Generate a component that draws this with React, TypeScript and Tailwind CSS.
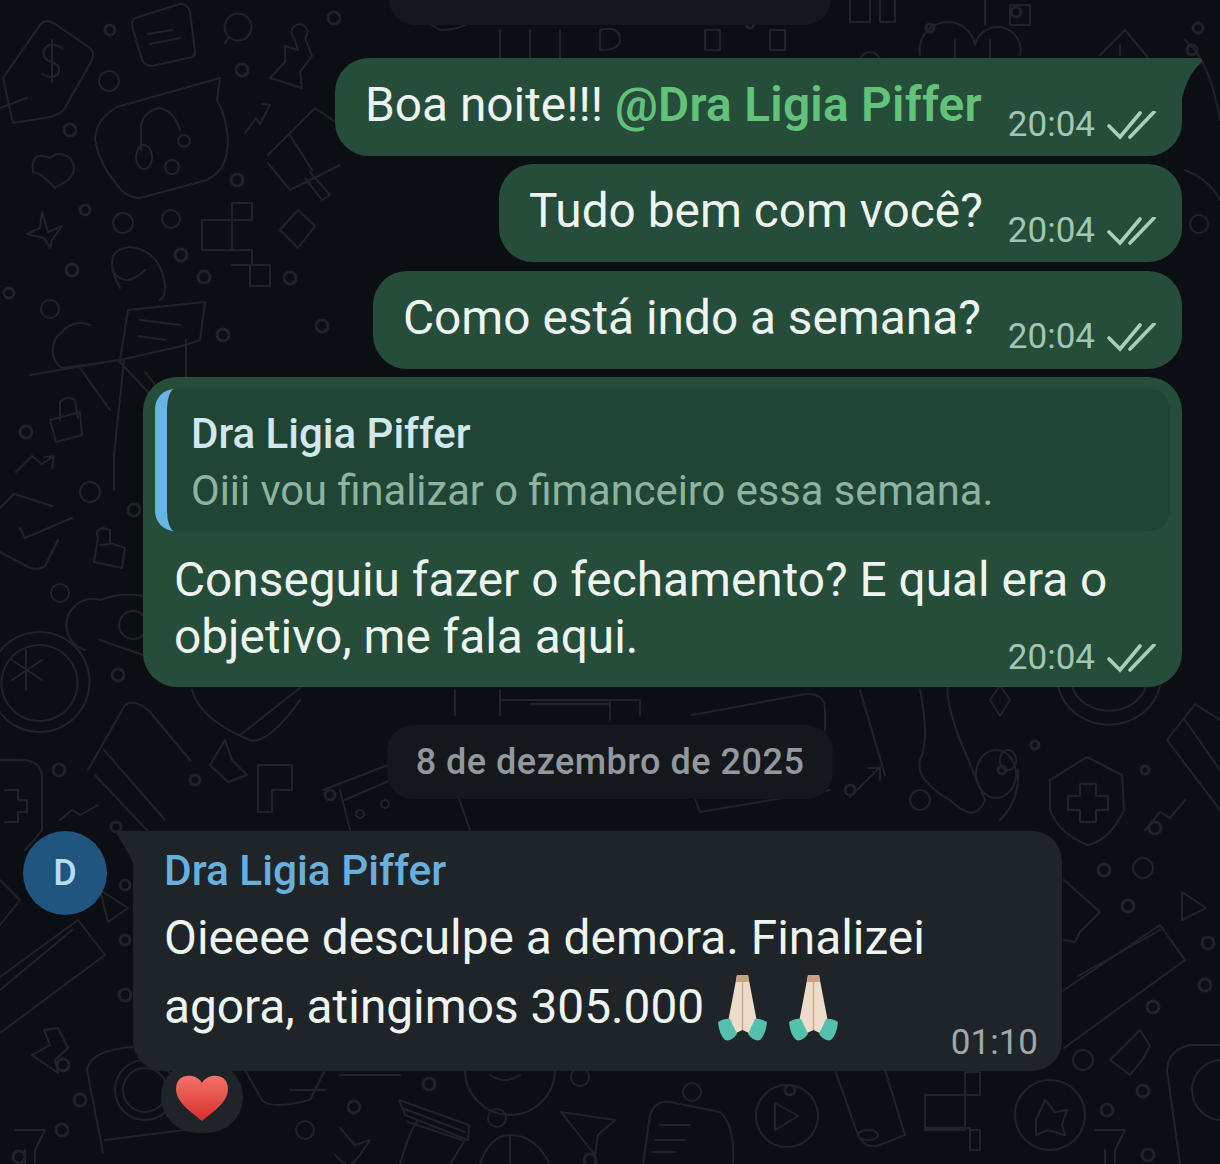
import React from "react";

const font = "font-['Roboto',sans-serif]";

const rings: [number, number, number][] = [
  [110, 30, 5], [109, 81, 10], [70, 130, 6], [242, 70, 6], [237, 180, 6], [334, 18, 6], [85, 210, 5],
  [123, 223, 10], [171, 219, 9], [181, 255, 6], [204, 277, 6], [72, 270, 6], [9, 293, 5], [50, 309, 9],
  [223, 335, 6], [322, 326, 6], [290, 278, 6], [26, 432, 6], [90, 492, 10], [134, 510, 6], [60, 593, 9],
  [118, 675, 6], [59, 770, 6], [116, 827, 5], [1155, 828, 6], [1104, 870, 6], [1143, 868, 10], [1128, 906, 6],
  [1208, 943, 6], [1205, 985, 6], [1153, 1007, 6], [1083, 1060, 10], [1143, 1091, 6], [1107, 1110, 6],
  [1148, 1155, 6], [429, 1084, 6], [354, 1107, 6], [305, 1130, 9], [497, 1118, 9], [590, 1160, 6], [580, 1077, 9],
  [692, 1092, 9], [790, 1090, 5], [80, 1100, 6], [62, 1130, 6], [19, 1157, 6], [63, 1065, 6],
  [195, 780, 5], [330, 795, 5], [850, 790, 5], [1002, 770, 4], [1035, 745, 4], [920, 800, 10], [1145, 770, 4],
  [1198, 28, 5], [750, 24, 4], [870, 62, 10], [1192, 50, 5], [1016, 12, 5], [1199, 224, 9],
  [930, 28, 4], [45, 880, 5], [125, 995, 6], [125, 940, 5], [125, 885, 5],
];

const lines = [
  // money tag
  "M40 25Q46 18 55 24L90 48Q95 52 92 60L65 108Q60 115 50 117L13 123L3 78Z",
  "M62 48Q50 40 44 50Q42 60 52 62Q62 66 58 74Q52 80 42 74M52 40V82M27 98L0 108",
  // note card
  "M135 18L180 4Q188 3 190 12L195 52Q195 58 188 58L152 66Q145 66 142 60L132 26Q132 20 135 18Z M148 34L172 30M150 44L180 38",
  // magnifier
  "M229 37A12 12 0 1 0 247 17A12 12 0 1 0 229 37L225 43",
  // chess figure
  "M285 46L298 50L294 38A8 8 0 1 1 305 38L312 56L300 72L302 88L270 78L285 62Z",
  // speech and headset
  "M220 78L117 107Q95 120 95 140Q100 165 115 182Q125 198 140 198L207 180Q228 170 228 140Q226 115 217 100Z",
  "M141 150V125Q145 110 160 108Q175 112 180 130M144 145A8 12 0 1 0 144.1 145M184 135A6 6 0 1 0 184.1 135M172 160A7 7 0 1 0 172.1 160",
  // arrow
  "M245 133L256 118L260 124L270 105L262 104",
  // megaphone
  "M268 155L315 108L340 125M268 163L290 190L340 165M290 135L312 170M305 178L322 200L330 195L310 172",
  // heart and star
  "M55 188Q40 172 33 172Q30 150 50 158Q58 150 70 158Q80 172 65 182Z",
  "M42 212L48 232L62 226L52 240L50 248L44 238L27 234L40 228Z",
  "M298 210L315 226L298 248L280 230Z",
  "M202 220H232V203H252V220H232V250H202ZM232 250H252V265H270V286H250V265H232",
  // smile and basket
  "M120 288Q100 250 130 247Q160 250 165 285Q165 298 160 300M112 270Q125 290 145 270",
  "M90 325A24 24 0 0 0 62 332A22 22 0 0 0 62 368L120 360L128 310L205 302L200 340L182 346L120 360M140 320L180 325M138 336L165 340",
  "M30 375L118 360L160 405L200 396M186 340V400M145 372L175 410M80 368L110 410",
  // left column
  "M60 420V402A11 11 0 0 1 75 400L78 418M50 420L80 412L82 435L56 442Z",
  "M16 472L32 456M32 456L42 464L54 456M54 456L44 457M54 456L52 468",
  "M0 508L14 494L52 506M20 528L25 538L72 518M58 540L45 566Q40 570 30 568L0 552",
  "M103 528Q94 530 98 538L94 562L122 568L125 548L110 543V530Z M100 545L110 544",
  "M85 650A20 20 0 0 1 100 600Q120 592 143 596M143 655L100 640M143 615A14 14 0 1 0 143 635",
  "M114 490V455M124 360L114 455",
  "M40 632A50 50 0 1 1 39 632M40 645A38 38 0 1 1 39 645M26 650L26 690M12 660L42 680M42 660L12 680",
  "M88 770L125 705Q135 698 150 712L190 760M95 775L175 860M104 750L165 820",
  "M0 760H20Q40 760 42 775L42 830Q35 840 25 850M5 790H18V800H27V812H18V822H5",
  "M60 820L72 810L80 815L98 805",
  // lower left
  "M0 977L78 920L105 955L0 1033M0 990L72 930",
  "M100 890L128 908L108 922Z",
  "M0 880L20 900L0 925",
  "M32 1055L50 1045L44 1030L58 1028L68 1048L55 1060L58 1073Z",
  "M87 1070Q90 1050 133 1047M87 1070L103 1153M105 1140L200 1128",
  "M15 1130H45L35 1150V1164M25 1150V1164",
  // under the date
  "M192 690Q200 720 250 740Q268 745 300 700M240 735L305 684",
  "M210 765L225 740L232 760L247 775L228 782Z",
  "M258 765H292V790H272V812H258Z",
  "M323 790L440 745L470 830M340 790L350 830M345 800L425 765M360 810A4 4 0 1 0 360.1 810M385 800A4 4 0 1 0 385.1 800",
  "M455 690V715M500 715V700H640V715M500 700V690M530 704H610M610 700V720",
  "M692 715L800 695Q825 690 825 710V730M692 790L700 812L830 790",
  "M850 797L880 767M868 768H880V780M860 690L885 775",
  "M920 690Q930 740 920 760Q915 780 950 800Q975 825 985 800L960 740Q945 700 948 684",
  "M1000 685L1010 700L1000 716L990 700Z",
  "M996 750A20 24 0 1 0 996.1 750M1008 750A8 10 0 1 0 1008.1 750M1018 770Q1020 800 1000 820",
  "M1058 686A52 48 0 0 0 1160 686M1072 686A38 32 0 0 0 1146 686",
  "M1167 740L1195 704L1220 720M1167 740L1220 810M1185 720L1220 770",
  // shield
  "M1050 780L1087 757L1122 775L1124 810Q1110 840 1088 845Q1060 835 1050 810Z",
  "M1080 784H1096V796H1108V810H1096V822H1080V810H1068V796H1080Z",
  "M1145 830L1160 812L1170 818L1185 800",
  // right column
  "M1064 880L1100 912L1080 932L1075 942L1064 940",
  "M1182 892L1206 908L1182 920Z",
  "M1064 990L1160 925L1185 960L1064 1048M1078 976L1160 930",
  "M1110 1060L1140 1030L1150 1046L1142 1060L1130 1075Z",
  "M1220 1045H1190Q1168 1050 1167 1070L1180 1164",
  "M1045 1100L1055 1112L1067 1110L1062 1125L1065 1135L1048 1130L1036 1135L1036 1120Z",
  "M1095 1130H1125L1115 1150V1164M1105 1150V1164",
  // bottom row
  "M245 1070L262 1100Q270 1110 310 1100L325 1070M290 1090H325M340 1075H400",
  "M400 1164Q410 1130 418 1120M465 1140L450 1164M399 1100L469 1125L468 1140L405 1115Z M402 1108L465 1132M408 1122L462 1140",
  "M340 1128L355 1145L370 1140L360 1155L352 1164M335 1155L345 1164",
  "M465 1070A32 32 0 0 0 555 1070M490 1075Q505 1085 520 1075",
  "M561 1112L615 1120L598 1135L595 1155Z",
  "M643 1164L650 1115Q655 1100 670 1102L720 1112Q735 1125 733 1164M660 1125H690M655 1140H685M652 1152H675",
  "M480 1164Q490 1135 510 1135Q535 1135 550 1164M510 1135V1164",
  "M775 1103L798 1116L775 1130Z",
  "M835 1070L858 1135Q865 1150 880 1145L905 1135L885 1070M868 1130A10 5 0 1 0 868.1 1130",
  "M925 1095H965V1072H980V1095H965V1130H925ZM925 1128H970V1150H980V1130H970",
  // top row
  "M410 12L440 30Q460 30 470 22M500 30V62M530 30V62M560 30V62M600 30Q620 25 620 40Q620 50 600 50ZM705 30H720V50H705Z M770 30H785V50H770Z",
  "M920 55A25 25 0 0 1 975 45A20 20 0 0 1 1020 55M955 40V60M990 40V60",
  "M985 0V25M1010 5H1030V25H1010ZM850 0V22H870V0M880 0V22H895V0",
  "M1100 55L1125 30L1150 60M1120 45V55",
  "M1185 170Q1210 180 1220 200M1185 40Q1210 60 1220 120",
];

function Doodles() {
  return (
    <svg className="absolute inset-0 h-full w-full" viewBox="0 0 1220 1164" fill="none" stroke="#1e2428" strokeWidth="2" strokeLinecap="round" strokeLinejoin="round">
      {lines.map((d, i) => (
        <path key={i} d={d} />
      ))}
      {rings.map(([x, y, r], i) => (
        <circle key={i} cx={x} cy={y} r={r} strokeWidth={r < 7 ? 3 : 2} />
      ))}
      <circle cx="145" cy="1090" r="30" />
      <circle cx="145" cy="1090" r="22" />
      <circle cx="1222" cy="1090" r="30" />
      <circle cx="787" cy="1116" r="31" />
      <circle cx="1050" cy="1115" r="35" />
    </svg>
  );
}

function DoubleCheck() {
  return (
    <svg className="ml-[12px] h-[29px] w-[49px]" viewBox="0 0 49 29" fill="none" stroke="#a9cfba" strokeWidth="3.6" strokeLinecap="round">
      <path d="M2 15L13 26L33 2" />
      <path d="M23 26L47 1" />
    </svg>
  );
}

function Stamp() {
  return (
    <div className="flex shrink-0 items-center text-[35px] leading-[40px] text-[#a3c6b3]">
      <span>20:04</span>
      <DoubleCheck />
    </div>
  );
}

function Outgoing({ width, children }: { width: string; children: React.ReactNode }) {
  return (
    <div className={width + " flex h-[98px] items-start justify-between rounded-[34px] bg-[#254d3a] pl-[30px] pr-[26px]"}>
      {children}
    </div>
  );
}

function Praying() {
  return (
    <svg className="h-[68px] w-[51px] shrink-0" viewBox="0 0 51 68">
      <path d="M20 1H31Q35 22 40 48L34 60L25.5 56L17 60L11 48Q16 22 20 1Z" fill="#eedcca" />
      <path d="M25.5 3V56" stroke="#c9a890" strokeWidth="1.5" />
      <path d="M20 1H31L32 8H19Z" fill="#c9a184" />
      <path d="M1 48Q8 44 13 45L20 60Q14 68 8 66Q2 60 1 48Z" fill="#54c0ae" />
      <path d="M50 48Q43 44 38 45L31 60Q37 68 43 66Q49 60 50 48Z" fill="#54c0ae" />
    </svg>
  );
}

function Heart() {
  return (
    <svg className="h-[48px] w-[54px]" viewBox="0 0 54 48">
      <defs>
        <linearGradient id="heart" x1="0" y1="0" x2="0" y2="1">
          <stop offset="0" stopColor="#f4736a" />
          <stop offset="1" stopColor="#d72f2c" />
        </linearGradient>
      </defs>
      <path d="M27 10C22 0 1 -1 1 16C1 30 18 40 27 48C36 40 53 30 53 16C53 -1 32 0 27 10Z" fill="url(#heart)" />
    </svg>
  );
}

export default function App() {
  return (
    <div className={font + " relative h-[1164px] w-[1220px] overflow-hidden bg-[#0b0f13]"}>
      <Doodles />
      <div className="relative flex flex-col items-end text-[47.8px] leading-[57px] text-[#eef5f0]">
        {/* day above, cut by the top of the picture */}
        <div className="-mt-[49px] flex h-[74px] w-[442px] items-center justify-center self-center rounded-[26px] bg-[#14181c] text-[36px] font-medium tracking-[0.5px] text-[#92989b]">
          7 de dezembro de 2025
        </div>

        <div className="relative mr-[38px] mt-[33px]">
          <Outgoing width="w-[847px]">
            <div className="mt-[19px] whitespace-nowrap">
              Boa noite!!! <span className="font-semibold tracking-[0.25px] text-[#63c27a]">@Dra Ligia Piffer</span>
            </div>
            <div className="mt-[47px]"><Stamp /></div>
          </Outgoing>
          {/* tail */}
          <svg className="absolute -right-[22px] top-0 h-[40px] w-[60px]" viewBox="0 0 60 40">
            <path d="M0 0H56Q60 1 57 5Q44 16 38 40H0Z" fill="#254d3a" />
          </svg>
        </div>

        <div className="mr-[38px] mt-[8px]">
          <Outgoing width="w-[683px]">
            <div className="mt-[19px] whitespace-nowrap">Tudo bem com você?</div>
            <div className="mt-[47px]"><Stamp /></div>
          </Outgoing>
        </div>

        <div className="mr-[38px] mt-[9px]">
          <Outgoing width="w-[809px]">
            <div className="mt-[19px] whitespace-nowrap">Como está indo a semana?</div>
            <div className="mt-[46px]"><Stamp /></div>
          </Outgoing>
        </div>

        <div className="mr-[38px] mt-[8px] h-[310px] w-[1039px] rounded-[34px] bg-[#254d3a] px-[12px] pt-[12px]">
          <div className="h-[142px] rounded-[20px] border-l-[12px] border-[#69b4e4] bg-[#214534] pl-[24px] pt-[22px]">
            <div className="whitespace-nowrap text-[42px] font-medium leading-[46px] text-[#d3e7ee]">Dra Ligia Piffer</div>
            <div className="mt-[11px] whitespace-nowrap text-[41.7px] leading-[46px] text-[#8eb3a0]">Oiii vou finalizar o fimanceiro essa semana.</div>
          </div>
          <div className="mt-[21px] flex items-end justify-between pl-[19px] pr-[14px]">
            <div className="w-[800px] whitespace-nowrap">
              Conseguiu fazer o fechamento? E qual era o
              <br />
              objetivo, me fala aqui.
            </div>
            <div className="-mb-[12px]"><Stamp /></div>
          </div>
        </div>

        <div className="mt-[38px] flex h-[74px] w-[446px] items-center justify-center self-center rounded-[26px] bg-[#14181c] text-[36px] font-medium tracking-[0.5px] text-[#92989b]">
          8 de dezembro de 2025
        </div>

        <div className="mt-[32px] flex self-start pl-[23px]">
          <div className="flex h-[84px] w-[84px] items-center justify-center rounded-full bg-[#205580] text-[36px] font-medium text-[#b4dcf5]">D</div>
          <div className="relative ml-[26px] h-[240px] w-[929px] rounded-[30px] rounded-tl-none bg-[#1f2429] pl-[31px] pt-[16px] leading-[69px]">
            <svg className="absolute -left-[18px] top-0 h-[36px] w-[20px]" viewBox="0 0 20 36">
              <path d="M20 0H0Q8 12 20 36Z" fill="#1f2429" />
            </svg>
            <div className="whitespace-nowrap text-[42.4px] font-medium leading-[48px] text-[#68b0dc]">Dra Ligia Piffer</div>
            <div className="mt-[9px] whitespace-nowrap">Oieeee desculpe a demora. Finalizei</div>
            <div className="flex items-center whitespace-nowrap">
              agora, atingimos 305.000
              <span className="ml-[13px] flex gap-[20px]"><Praying /><Praying /></span>
            </div>
            <div className="absolute bottom-[8px] right-[24px] text-[35px] leading-[40px] text-[#a2a7aa]">01:10</div>
            <div className="absolute left-[28px] top-[230px] flex h-[72px] w-[82px] items-center justify-center rounded-full bg-[#1f2429]">
              <Heart />
            </div>
          </div>
        </div>
      </div>
    </div>
  );
}
